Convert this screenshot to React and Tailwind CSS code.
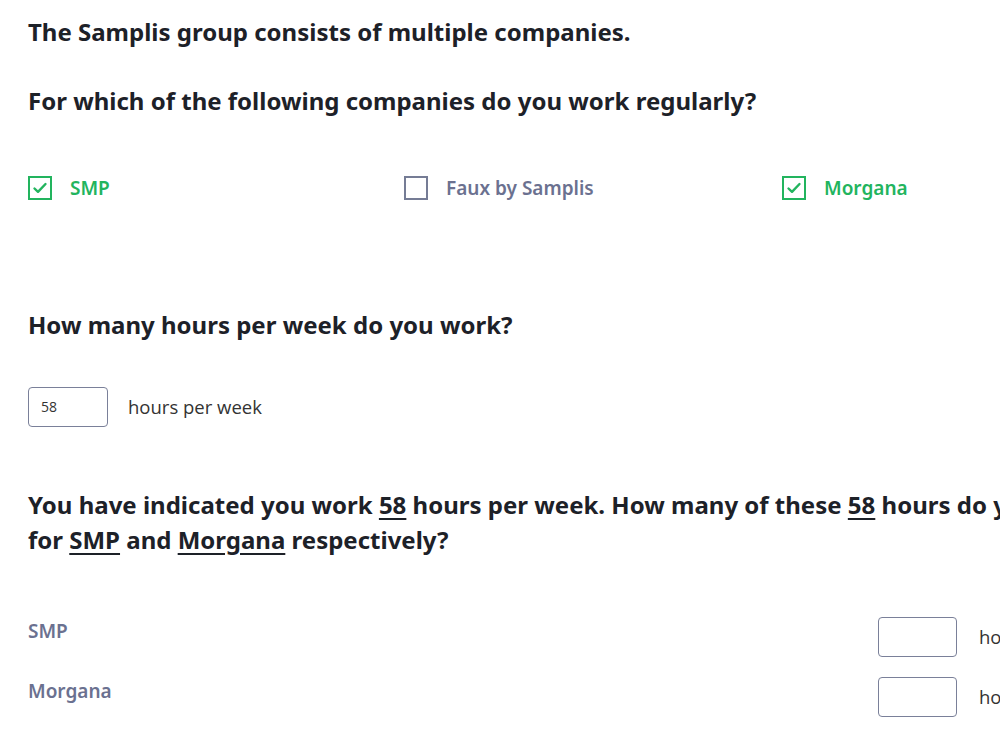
import {useState} from "react";

const companies = [
  {id: "smp", name: "SMP", checked: true},
  {id: "faux", name: "Faux by Samplis", checked: false},
  {id: "morgana", name: "Morgana", checked: true},
];

function CheckBox({label, checked}) {
  return (
    <label className="flex items-center gap-[18px] cursor-pointer">
      <span
        className={`flex h-6 w-6 items-center justify-center border-2 ${
          checked ? "border-[#22b45e]" : "border-[#757c95]"
        }`}
      >
        {checked && (
          <svg width="16" height="16" viewBox="0 0 16 16" fill="none">
            <path d="M2.5 8.5l3.5 3.3L13.5 4" stroke="#22b45e" strokeWidth="2.4" strokeLinecap="round" strokeLinejoin="round"/>
          </svg>
        )}
      </span>
      <span className={`text-[19px] font-semibold ${checked ? "text-[#22b45e]" : "text-[#6b7190]"}`}>
        {label}
      </span>
    </label>
  );
}

export default function App() {
  const [hours, setHours] = useState("58");

  return (
    <div className="h-[751px] w-[1000px] overflow-hidden bg-white font-['Noto_Sans',sans-serif] text-[#1d2128]">
      <div className="w-[1160px] pl-7 pt-4">
        <h2 className="text-[24px] font-bold leading-8">The Samplis group consists of multiple companies.</h2>
        <h2 className="mt-[37px] text-[24px] font-bold leading-8">For which of the following companies do you work regularly?</h2>

        <div className="mt-[57px] grid grid-cols-[376px_378px_376px]">
          {companies.map((c) => (
            <CheckBox key={c.id} label={c.name} checked={c.checked}/>
          ))}
        </div>

        <h2 className="mt-[106px] text-[24px] font-bold leading-8">How many hours per week do you work?</h2>

        <div className="mt-[46px] flex items-center gap-5">
          <input
            value={hours}
            onChange={(e) => setHours(e.target.value)}
            className="h-10 w-[80px] rounded border border-[#7a8099] px-3 font-['Open_Sans',sans-serif] text-sm text-[#333] outline-none"
          />
          <span className="font-['Open_Sans',sans-serif] text-[18.5px] text-[#333]">hours per week</span>
        </div>

        <p className="mt-[60px] max-w-[1090px] text-[24px] font-bold leading-[35px]">
          You have indicated you work <u className="underline-offset-4">58</u> hours per week. How many of these{" "}
          <u className="underline-offset-4">58</u> hours do you work for <u className="underline-offset-4">SMP</u> and{" "}
          <u className="underline-offset-4">Morgana</u> respectively?
        </p>

        <div className="mt-[60px] flex flex-col gap-5">
          {["SMP", "Morgana"].map((name) => (
            <div key={name} className="flex items-start">
              <span className="w-[850px] text-[19px] font-semibold leading-7 text-[#6b7190]">{name}</span>
              <input className="h-10 w-[79px] rounded border border-[#7a8099] outline-none"/>
              <span className="ml-[22px] self-center font-['Open_Sans',sans-serif] text-[18.5px] text-[#333]">hours per week</span>
            </div>
          ))}
        </div>
      </div>
    </div>
  );
}
